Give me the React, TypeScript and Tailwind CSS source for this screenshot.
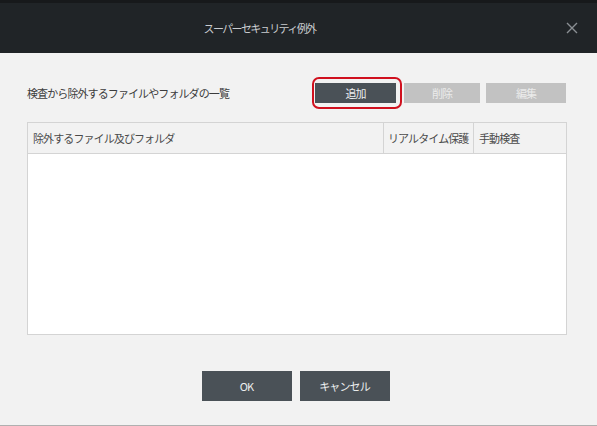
import React from 'react';

const font = { fontFamily: '"Noto Sans CJK JP", "Noto Sans", sans-serif' };

export default function App() {
  return (
    <div className="w-[597px] h-[426px] bg-[#f2f2f2] flex flex-col overflow-hidden text-[11px] tracking-[-0.9px]" style={font}>
      {/* Title bar */}
      <div className="h-[3px] bg-[#17191b]" />
      <div className="h-[50px] bg-[#202427] relative flex items-center justify-center pr-[78px]">
        <span className="text-[#c9cccf] text-[11px] tracking-[-1.6px]">スーパーセキュリティ例外</span>
        <button className="absolute right-[17px] top-[17px] w-4 h-4 flex items-center justify-center">
          <svg width="12" height="12" viewBox="0 0 12 12" stroke="#8a8f93" strokeWidth="1.4">
            <path d="M1 1 L11 11 M11 1 L1 11" />
          </svg>
        </button>
      </div>

      {/* Body */}
      <div className="flex-1 flex flex-col pl-[27px] pr-[30px] pt-[30px]">
        <div className="flex items-center h-[20px]">
          <span className="text-[#3c3c3c] flex-1">検査から除外するファイルやフォルダの一覧</span>
          <div className="relative w-[81px] h-[20px] mr-[8px]">
            <button className="w-full h-full bg-[#4a5157] text-[#eceeef]">追加</button>
            <div className="absolute left-[-3px] right-[-6px] top-[-6px] bottom-[-6px] border-2 border-[#d0101e] rounded-[7px]" />
          </div>
          <button className="w-[76px] h-[20px] bg-[#c2c2c2] text-[#ebebeb] mr-[6px]">削除</button>
          <button className="w-[80px] h-[20px] bg-[#c2c2c2] text-[#ebebeb] mr-[1px]">編集</button>
        </div>

        <div className="mt-[19px] h-[213px] w-[540px] border border-[#d4d4d4] bg-white flex flex-col">
          <div className="h-[31px] bg-[#f2f2f2] border-b border-[#d4d4d4] flex text-[#4a4a4a] whitespace-nowrap">
            <div className="flex-1 flex items-center pl-[5px] border-r border-[#d4d4d4]">除外するファイル及びフォルダ</div>
            <div className="w-[90px] flex items-center pl-[4px] border-r border-[#d4d4d4]">リアルタイム保護</div>
            <div className="w-[92px] flex items-center pl-[5px]">手動検査</div>
          </div>
          <div className="flex-1" />
        </div>

        <div className="flex justify-center gap-[8px] mt-[36px] ml-[-3px]">
          <button className="w-[90px] h-[30px] bg-[#4a5157] text-[#eceeef]">OK</button>
          <button className="w-[90px] h-[30px] bg-[#4a5157] text-[#eceeef]">キャンセル</button>
        </div>
      </div>
      <div className="h-[1px] bg-[#b0b0b0]" />
    </div>
  );
}
